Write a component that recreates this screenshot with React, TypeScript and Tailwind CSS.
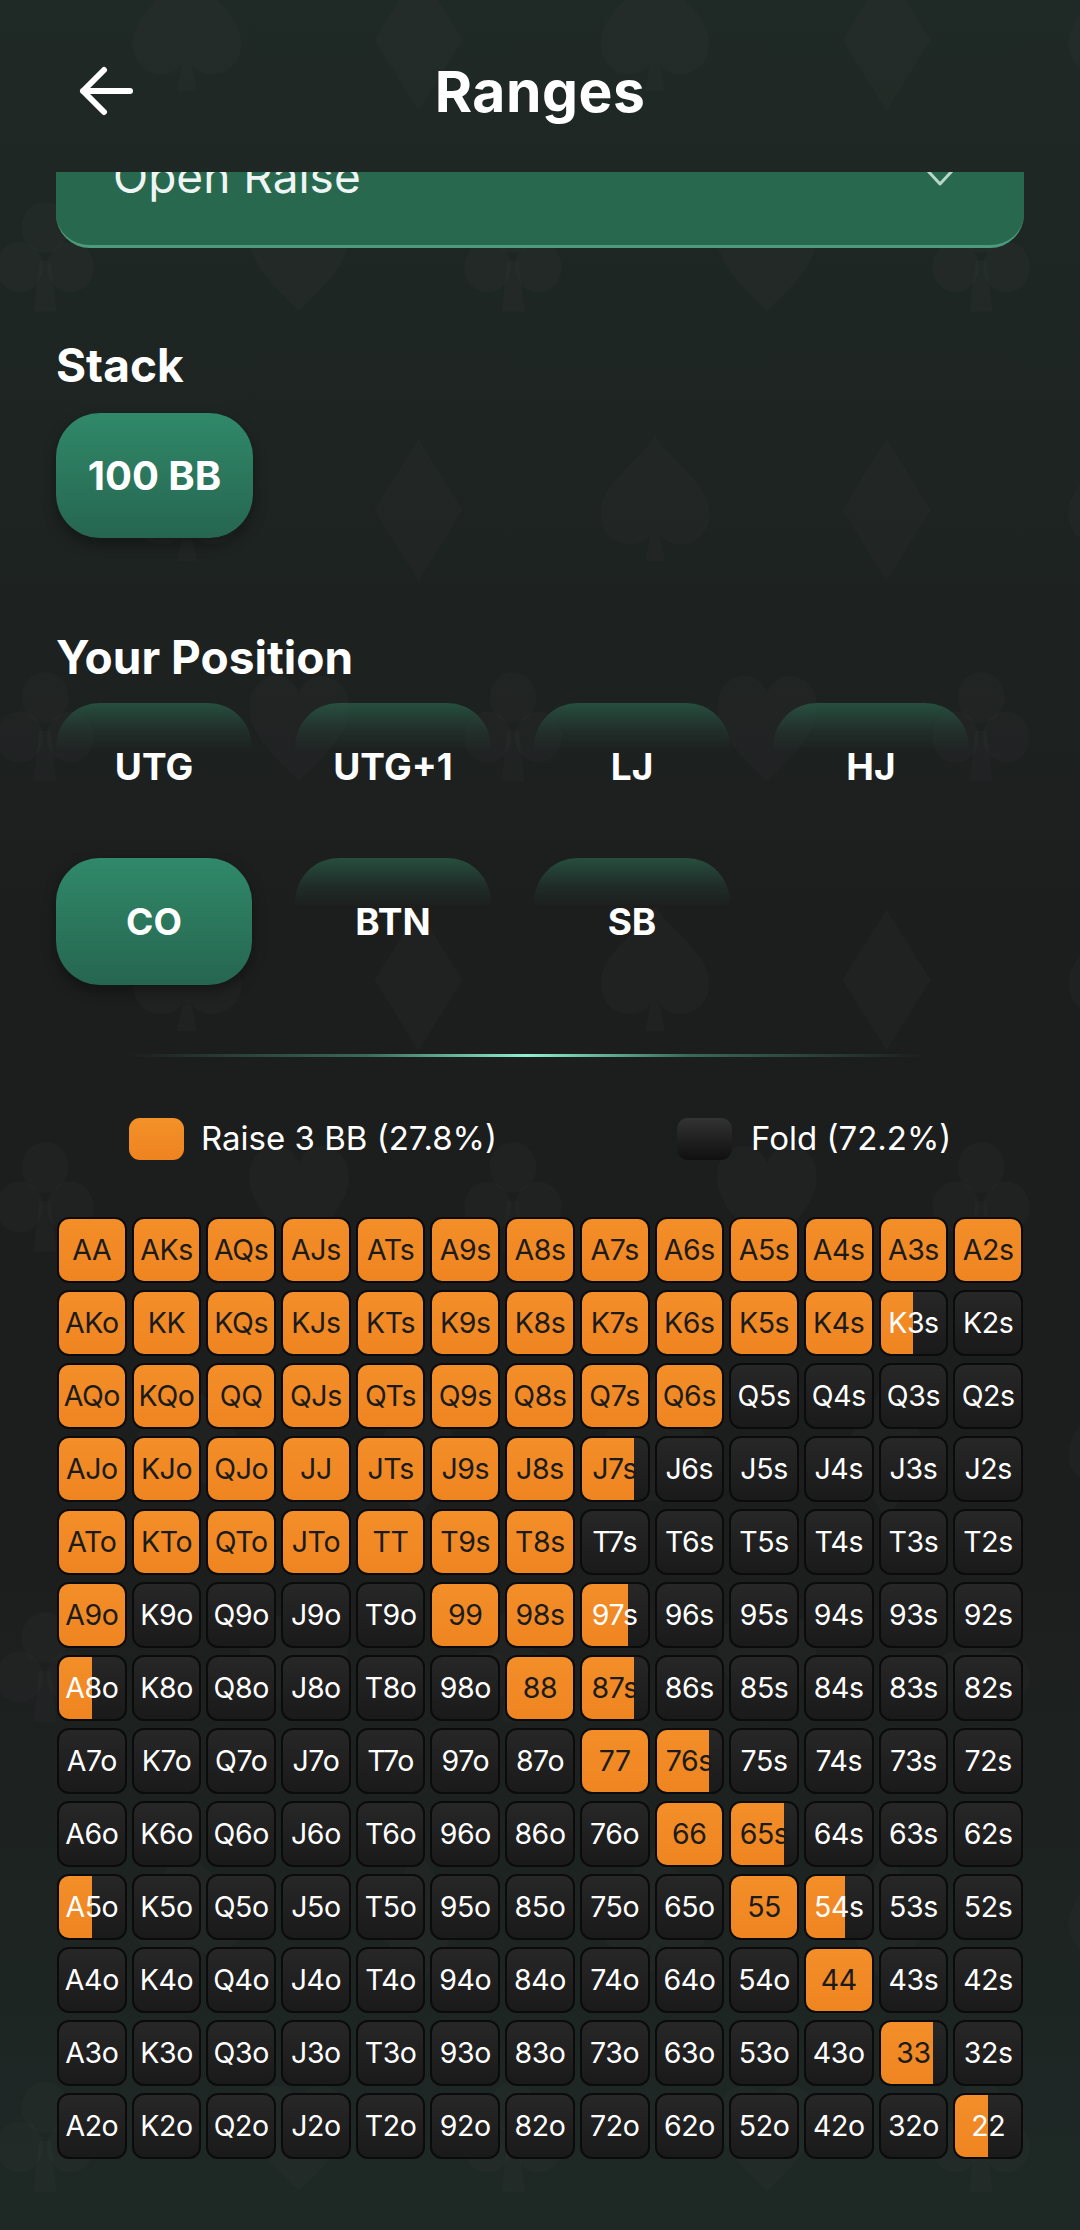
import React from "react";

const RANKS = ["A", "K", "Q", "J", "T", "9", "8", "7", "6", "5", "4", "3", "2"];

// share of each hand that is raised (anything missing folds)
const raise: Record<string, number> = {
  AA: 1, AKs: 1, AQs: 1, AJs: 1, ATs: 1, A9s: 1, A8s: 1, A7s: 1, A6s: 1, A5s: 1, A4s: 1, A3s: 1, A2s: 1,
  AKo: 1, KK: 1, KQs: 1, KJs: 1, KTs: 1, K9s: 1, K8s: 1, K7s: 1, K6s: 1, K5s: 1, K4s: 1, K3s: 0.5,
  AQo: 1, KQo: 1, QQ: 1, QJs: 1, QTs: 1, Q9s: 1, Q8s: 1, Q7s: 1, Q6s: 1,
  AJo: 1, KJo: 1, QJo: 1, JJ: 1, JTs: 1, J9s: 1, J8s: 1, J7s: 0.8,
  ATo: 1, KTo: 1, QTo: 1, JTo: 1, TT: 1, T9s: 1, T8s: 1,
  A9o: 1, "99": 1, "98s": 1, "97s": 0.7,
  A8o: 0.5, "88": 1, "87s": 0.8,
  "77": 1, "76s": 0.8,
  "66": 1, "65s": 0.8,
  A5o: 0.5, "55": 1, "54s": 0.6,
  "44": 1,
  "33": 0.8,
  "22": 0.5,
};

function handName(i: number, j: number) {
  if (i === j) return RANKS[i] + RANKS[j];
  if (j > i) return RANKS[i] + RANKS[j] + "s";
  return RANKS[j] + RANKS[i] + "o";
}

const positions = ["UTG", "UTG+1", "LJ", "HJ", "CO", "BTN", "SB"];

function Cell({ name }: { name: string }) {
  const frac = raise[name] ?? 0;
  const dark = frac >= 0.75;
  return (
    <div className="relative h-[66px] overflow-hidden rounded-[12px] border-[2.5px] border-[#0b0b0b] bg-gradient-to-b from-[#272727] to-[#1a1a1a]">
      {frac > 0 && (
        <div
          className="absolute inset-y-0 left-0 bg-gradient-to-b from-[#f38e29] to-[#ef8520]"
          style={{ width: `${frac * 100}%` }}
        />
      )}
      <span
        className={`relative flex h-full items-center justify-center text-[28.5px] tracking-[-0.4px] ${
          dark ? "text-[#1b1b1b]" : "text-white"
        }`}
      >
        {name}
      </span>
    </div>
  );
}

function SuitPattern() {
  return (
    <svg className="pointer-events-none absolute inset-0 h-full w-full" aria-hidden="true">
      <defs>
        <path id="spade" d="M50 5 C35 25 5 40 5 62 C5 78 20 86 33 84 C40 83 45 79 47 75 L42 97 L58 97 L53 75 C55 79 60 83 67 84 C80 86 95 78 95 62 C95 40 65 25 50 5 Z" />
        <path id="diamond" d="M50 0 L88 50 L50 100 L12 50 Z" />
        <path id="heart" d="M50 92 C20 66 5 50 5 30 C5 15 17 5 30 5 C40 5 47 12 50 20 C53 12 60 5 70 5 C83 5 95 15 95 30 C95 50 80 66 50 92 Z" />
        <g id="club">
          <circle cx="50" cy="27" r="21" />
          <circle cx="27" cy="60" r="21" />
          <circle cx="73" cy="60" r="21" />
          <path d="M45 55 L40 97 L60 97 L55 55 Z" />
        </g>
        <pattern id="suits" x="0" y="0" width="468" height="470" patternUnits="userSpaceOnUse">
          <g fill="#ffffff" fillOpacity="0.016">
            <use href="#spade" transform="translate(127 430) scale(1.2 1.35)" />
            <use href="#diamond" transform="translate(361 440) scale(1.15 1.4)" />
            <use href="#spade" transform="translate(127 -40) scale(1.2 1.35)" />
            <use href="#diamond" transform="translate(361 -30) scale(1.15 1.4)" />
            <use href="#club" transform="translate(-10 195) scale(1.1 1.2)" />
            <use href="#heart" transform="translate(244 200) scale(1.1 1.2)" />
            <use href="#club" transform="translate(458 195) scale(1.1 1.2)" />
          </g>
        </pattern>
      </defs>
      <rect width="100%" height="100%" fill="url(#suits)" />
    </svg>
  );
}

export default function App() {
  return (
    <div className="relative h-[2230px] w-[1080px] overflow-hidden bg-[linear-gradient(180deg,#1f2925_0%,#1d2321_25%,#1c1d1d_45%,#1c1e1d_70%,#1e2926_100%)] font-['Inter',sans-serif] text-white">
      <SuitPattern />

      <div className="relative">
        {/* header */}
        <header className="grid h-[172px] grid-cols-[1fr_auto_1fr] items-center pt-[10px]">
          <div className="pl-[79px]">
            <svg width="56" height="52" viewBox="0 0 56 52" fill="none">
              <path d="M51 26H4M25 5L4 26L25 47" stroke="#fff" strokeWidth="6" strokeLinecap="round" strokeLinejoin="round" />
            </svg>
          </div>
          <h1 className="text-[57px] font-bold leading-none tracking-[0.5px]">Ranges</h1>
          <div />
        </header>

        {/* dropdown, scrolled under the header */}
        <div className="mx-[56px] h-[76px] overflow-hidden rounded-b-[34px] border-b-[3px] border-[#4c9b7d] bg-[#28684f]">
          <div className="flex items-start justify-between pl-[57px] pr-[69px]">
            <span className="-mt-[19px] text-[46px] leading-none text-[#eef5f2]">Open Raise</span>
            <svg className="-mt-[7px]" width="30" height="30" viewBox="0 0 30 30" fill="none">
              <path d="M3 6L15 19L27 6" stroke="#b9d6cb" strokeWidth="3" strokeLinecap="round" strokeLinejoin="round" />
            </svg>
          </div>
        </div>

        <section className="px-[56px]">
          <h2 className="mt-[94px] text-[46px] font-bold leading-none">Stack</h2>
          <button className="mt-[25px] flex h-[125px] w-[197px] items-center justify-center rounded-[44px] bg-gradient-to-b from-[#30896a] to-[#266650] text-[40px] font-bold shadow-[0_6px_14px_rgba(0,0,0,0.35)]">
            100 BB
          </button>

          <h2 className="mt-[96px] text-[46px] font-bold leading-none">Your Position</h2>
          <div className="mt-[23px] grid grid-cols-[196px_196px_196px_196px] gap-x-[43px] gap-y-[28px]">
            {positions.map((p) =>
              p === "CO" ? (
                <button
                  key={p}
                  className="flex h-[127px] items-center justify-center rounded-[44px] bg-gradient-to-b from-[#30896a] to-[#266650] text-[37px] font-bold shadow-[0_6px_14px_rgba(0,0,0,0.35)]"
                >
                  {p}
                </button>
              ) : (
                <button
                  key={p}
                  className="flex h-[127px] items-center justify-center rounded-[44px] bg-[linear-gradient(180deg,rgba(42,94,74,0.75)_0%,rgba(38,70,59,0.35)_22%,rgba(30,40,36,0)_38%)] text-[37px] font-bold"
                >
                  {p}
                </button>
              )
            )}
          </div>
        </section>

        <div className="ml-[127px] mt-[69px] h-[3px] w-[799px] bg-[linear-gradient(90deg,rgba(90,200,160,0)_0%,rgba(80,170,140,0.55)_30%,#8ff0cf_50%,rgba(80,170,140,0.55)_70%,rgba(90,200,160,0)_100%)]" />

        {/* legend */}
        <div className="ml-[129px] mt-[57px] grid h-[42px] grid-cols-[548px_auto] items-center">
          <div className="flex items-center gap-[17px]">
            <span className="h-[42px] w-[55px] rounded-[11px] bg-gradient-to-b from-[#f49129] to-[#ee831f]" />
            <span className="text-[33px] font-normal">Raise 3 BB (27.8%)</span>
          </div>
          <div className="flex items-center gap-[19px]">
            <span className="h-[42px] w-[55px] rounded-[11px] bg-gradient-to-b from-[#333333] to-[#101010]" />
            <span className="text-[33px] font-normal">Fold (72.2%)</span>
          </div>
        </div>

        {/* hand grid */}
        <div className="mx-[57px] mt-[61px] grid grid-cols-13 gap-x-[5px] gap-y-[7px]">
          {RANKS.map((_, i) =>
            RANKS.map((__, j) => {
              const name = handName(i, j);
              return <Cell key={name} name={name} />;
            })
          )}
        </div>
      </div>
    </div>
  );
}
